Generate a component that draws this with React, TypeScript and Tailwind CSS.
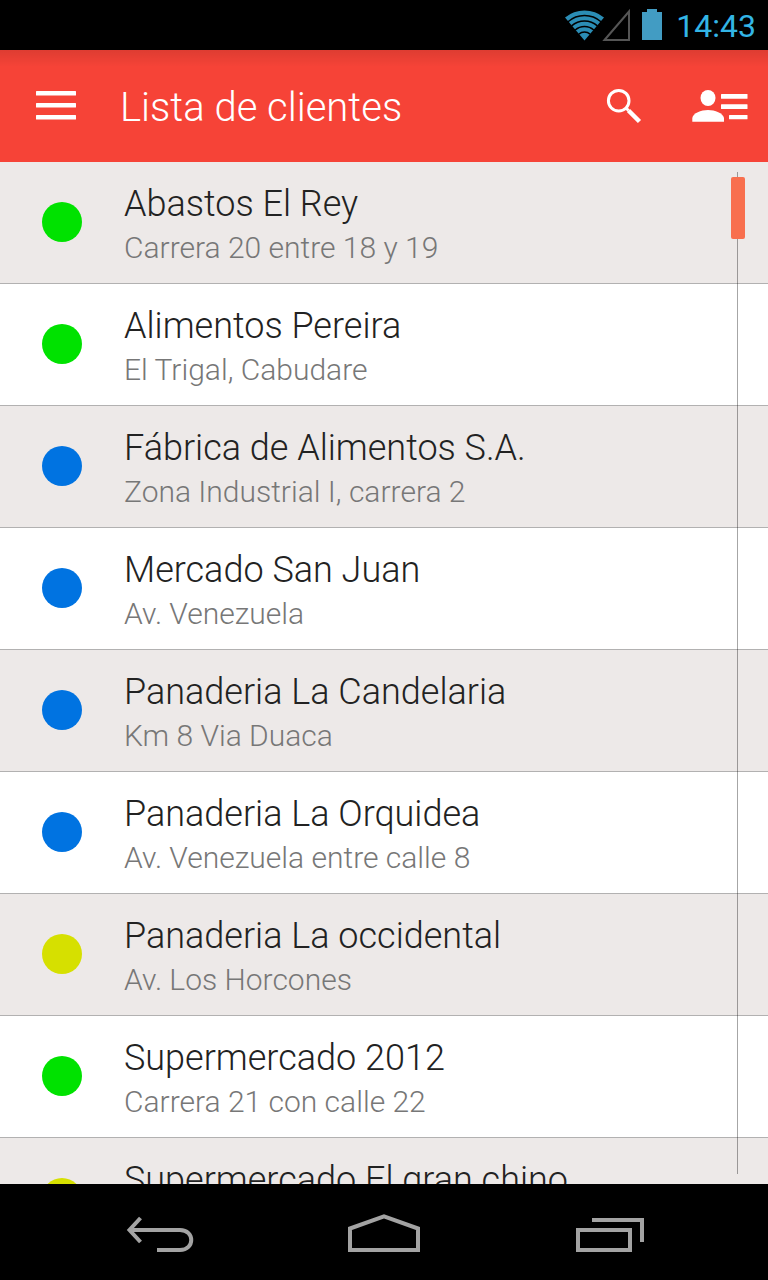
type Status = "green" | "blue" | "yellow";

interface Client {
  name: string;
  address: string;
  status: Status;
}

const clients: Client[] = [
  { name: "Abastos El Rey", address: "Carrera 20 entre 18 y 19", status: "green" },
  { name: "Alimentos Pereira", address: "El Trigal, Cabudare", status: "green" },
  { name: "Fábrica de Alimentos S.A.", address: "Zona Industrial I, carrera 2", status: "blue" },
  { name: "Mercado San Juan", address: "Av. Venezuela", status: "blue" },
  { name: "Panaderia La Candelaria", address: "Km 8 Via Duaca", status: "blue" },
  { name: "Panaderia La Orquidea", address: "Av. Venezuela entre calle 8", status: "blue" },
  { name: "Panaderia La occidental", address: "Av. Los Horcones", status: "yellow" },
  { name: "Supermercado 2012", address: "Carrera 21 con calle 22", status: "green" },
  { name: "Supermercado El gran chino", address: "", status: "yellow" },
];

const statusColor: Record<Status, string> = {
  green: "bg-[#00e200]",
  blue: "bg-[#0073e1]",
  yellow: "bg-[#d6e000]",
};

function StatusBar() {
  return (
    <div className="flex h-[50px] shrink-0 items-center justify-end bg-black pr-3 text-[#33b5e5]">
      <svg className="h-[50px] w-[100px]" viewBox="564 0 100 50" aria-hidden="true">
        <path d="M565 17.5A30.500 30.500 0 0 1 604 17.500L584.500 40.500Z" fill="#2b8db5" />
        <g fill="none" stroke="#000" strokeWidth="1.500">
          <path d="M568 21.700A25 25 0 0 1 601 21.700" />
          <path d="M571.600 25.900A19.500 19.500 0 0 1 597.400 25.900" />
          <path d="M575.200 30A14 14 0 0 1 593.800 30" />
          <path d="M578.900 34.100A8.500 8.500 0 0 1 590.100 34.100" />
        </g>
        <path d="M604.500 40L629 11.500V40Z" fill="none" stroke="#555" strokeWidth="2" />
        <path d="M647 9h10v3h5v28h-20V12h5Z" fill="#429cc3" />
      </svg>
      <time className="ml-3 pt-0.5 text-[32px] leading-[48px]">14:43</time>
    </div>
  );
}

function AppBar() {
  return (
    <header className="flex h-28 shrink-0 items-center bg-[#f64337] bg-linear-to-b from-black/10 to-transparent to-15% pr-5 pl-9 text-white">
      <button type="button" aria-label="Menú">
        <svg className="h-10 w-10" viewBox="0 0 40 40" fill="currentColor" aria-hidden="true">
          <rect y="5" width="40" height="4.500" rx="0.500" />
          <rect y="17" width="40" height="4.500" rx="0.500" />
          <rect y="29" width="40" height="4.500" rx="0.500" />
        </svg>
      </button>
      <h1 className="ml-11 flex-1 pt-1 text-[40px] leading-[48px] font-light">Lista de clientes</h1>
      <button type="button" aria-label="Buscar">
        <svg className="h-10 w-10" viewBox="604 86 40 40" fill="none" stroke="currentColor" aria-hidden="true">
          <circle cx="618.700" cy="100.700" r="10.300" strokeWidth="3" />
          <path d="M626 108l2.500 2.500" strokeWidth="3" />
          <path d="M628.500 110.500l11 11" strokeWidth="4.500" />
        </svg>
      </button>
      <button type="button" aria-label="Opciones de clientes" className="ml-12">
        <svg className="h-10 w-14" viewBox="692 86 56 40" fill="currentColor" aria-hidden="true">
          <ellipse cx="708" cy="98" rx="7.500" ry="8" />
          <path d="M692.300 121.800V118C693 113 701 110 708 110s15 3 16 8v3.800Z" />
          <rect x="721" y="94" width="26.500" height="4.700" rx="0.500" />
          <rect x="721" y="104.300" width="26.500" height="4.700" rx="0.500" />
          <rect x="729" y="115" width="18.500" height="4.200" rx="0.500" />
        </svg>
      </button>
    </header>
  );
}

function ClientRow({ client }: { client: Client }) {
  return (
    <li className="flex h-[122px] items-start border-b border-[#b2b1b1] pl-[42px] odd:bg-[#ede9e8] even:bg-white">
      <span className={`mt-10 size-10 shrink-0 rounded-full ${statusColor[client.status]}`} />
      <div className="ml-[42px] flex min-w-0 flex-col gap-1 pt-[22px] font-light whitespace-nowrap">
        <h2 className="text-[36px] leading-10 text-[#222]">{client.name}</h2>
        <p className="text-[30px] leading-10 text-[#777]">{client.address}</p>
      </div>
    </li>
  );
}

function NavigationBar() {
  return (
    <nav className="flex h-24 shrink-0 items-center justify-center gap-[120px] bg-black text-[#a3a3a3]">
      <button type="button" aria-label="Atrás">
        <svg className="h-24 w-[104px]" viewBox="108 1184 104 96" fill="none" stroke="currentColor" strokeWidth="4" aria-hidden="true">
          <path d="M129 1230h51c15 0 15 20 0 20h-23" />
          <path d="M140.500 1218L129.500 1230L140.500 1242" />
        </svg>
      </button>
      <button type="button" aria-label="Inicio">
        <svg className="h-24 w-[104px]" viewBox="332 1184 104 96" fill="none" stroke="currentColor" strokeWidth="4" aria-hidden="true">
          <path d="M350 1250V1228.500L384 1216.300L418 1228.500V1250Z" />
        </svg>
      </button>
      <button type="button" aria-label="Aplicaciones recientes">
        <svg className="h-24 w-[104px]" viewBox="556 1184 104 96" fill="none" stroke="currentColor" strokeWidth="4" aria-hidden="true">
          <path d="M578 1230h52v20h-52Z" />
          <path d="M592 1220h50v22" />
        </svg>
      </button>
    </nav>
  );
}

export default function App() {
  return (
    <div className="flex h-screen flex-col bg-white font-[Roboto,sans-serif]">
      <StatusBar />
      <AppBar />
      <main className="relative min-h-0 flex-1">
        <ul className="h-full overflow-y-auto [scrollbar-width:none]">
          {clients.map((client) => (
            <ClientRow key={client.name} client={client} />
          ))}
        </ul>
        <div className="absolute top-2.5 right-[23px] bottom-2.5 flex w-[14px] pl-1.5" aria-hidden="true">
          <div className="w-px bg-black/35" />
          <div className="absolute top-[5px] left-0 h-[62px] w-full rounded-xs bg-[#f86f4e]" />
        </div>
      </main>
      <NavigationBar />
    </div>
  );
}
